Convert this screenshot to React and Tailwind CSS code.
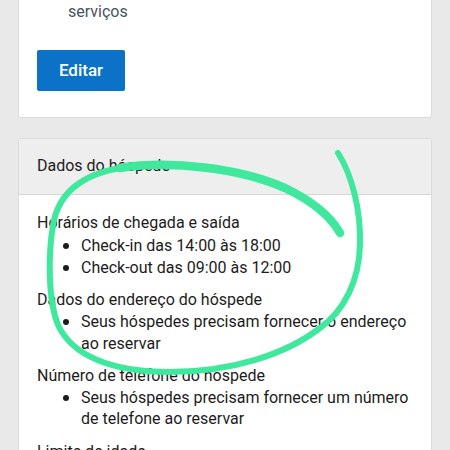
import React from 'react';

const secoes = [
    { titulo: 'Horários de chegada e saída', itens: ['Check-in das 14:00 às 18:00', 'Check-out das 09:00 às 12:00'] },
    { titulo: 'Dados do endereço do hóspede', itens: ['Seus hóspedes precisam fornecer o endereço ao reservar'] },
    { titulo: 'Número de telefone do hóspede', itens: ['Seus hóspedes precisam fornecer um número de telefone ao reservar'] },
    { titulo: 'Limite de idade', itens: ['Não há limite de idade'] },
];

const Circulo = () => (
    <svg className="absolute left-0 top-0 pointer-events-none" width="450" height="450" viewBox="0 0 450 450">
        <path
            d="M 338 153 C 352 175, 361 210, 360 245 C 359 280, 345 310, 320 328 C 285 355, 230 372, 170 372 C 110 372, 72 355, 58 325 C 48 300, 48 255, 53 225 C 58 195, 80 175, 120 168"
            fill="none" stroke="#3fe89c" strokeWidth="6" strokeLinecap="round" />
        <path
            d="M 120 168 C 170 160, 240 168, 285 188 C 310 200, 330 215, 340 233"
            fill="none" stroke="#3fe89c" strokeWidth="8.5" strokeLinecap="round" />
    </svg>
);

const App = () => {
    return (
        <div className="relative w-[450px] h-[450px] overflow-hidden bg-[#e9e9e9] text-[#1c1c1c] text-[16px] leading-[21.25px]" style={{ fontFamily: 'Roboto, "Liberation Sans", sans-serif' }}>
            <div className="mx-[18px] bg-white border border-t-0 border-[#dcdcdc] rounded-b-[3px] px-[18px] pt-px pb-[26px]">
                <p className="pl-[31px] text-[#465462]">serviços</p>
                <button className="block mt-[28px] w-[88px] h-[41px] bg-[#0b72c8] text-white text-[17px] font-medium rounded-[2px]">Editar</button>
            </div>
            <div className="mx-[18px] mt-[20px] bg-white border border-[#dcdcdc] rounded-[3px]">
                <div className="h-[56px] bg-[#eeeeee] border-b border-[#d6d6d6] px-[18px] flex items-center pb-[2px]">Dados do hóspede</div>
                <div className="px-[18px] pt-[17px]">
                    {secoes.map(s => (
                        <div key={s.titulo} className="mb-[11px]">
                            <p>{s.titulo}</p>
                            <ul className="list-disc pl-[44px] marker:text-[18px]">
                                {s.itens.map(i => <li key={i}>{i}</li>)}
                            </ul>
                        </div>
                    ))}
                </div>
            </div>
            <Circulo />
        </div>
    );
};

export default App;
